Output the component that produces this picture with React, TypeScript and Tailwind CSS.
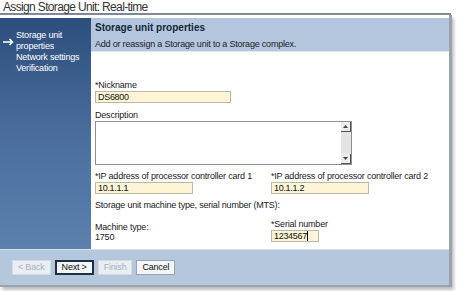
import { ReactNode } from 'react'

const sideItems = [
  { label: ['Storage unit', 'properties'], active: true },
  { label: ['Network settings'], active: false },
  { label: ['Verification'], active: false },
]

function Field({ label, required, children }: { label: string; required?: boolean; children: ReactNode }) {
  return (
    <div className="flex flex-col">
      <span className="h-[9px] leading-[9px] text-[9px] tracking-[-0.2px] text-[#222]">
        {required ? '*' : ''}
        {label}
      </span>
      <div className="mt-[1px]">{children}</div>
    </div>
  )
}

function TextInput({ value, width, caret }: { value: string; width: string; caret?: boolean }) {
  return (
    <div
      className={`${width} h-[12px] border border-[#bdb7a4] bg-[#fdf5d6] px-[2px] text-[9px] leading-[10px] tracking-[-0.3px] text-[#111] flex items-center`}
    >
      {value}
      {caret && <span className="w-px h-[10px] bg-black" />}
    </div>
  )
}

function Btn({ label, primary, disabled }: { label: string; primary?: boolean; disabled?: boolean }) {
  return (
    <button
      className={`h-[15px] px-[5px] text-[9px] leading-[11px] tracking-[-0.2px] ${
        primary
          ? 'border-2 border-[#1f2f44] bg-[#f4f6f8] text-[#111]'
          : disabled
            ? 'border border-[#d3dbe4] bg-[#e9eef3] text-[#a9b1bb]'
            : 'border border-[#9aa4b0] bg-[#f4f6f8] text-[#111]'
      }`}
    >
      {label}
    </button>
  )
}

export default function App() {
  return (
    <div
      className="w-[458px] h-[291px] bg-white overflow-hidden"
      style={{ fontFamily: '"Liberation Sans", Arial, sans-serif' }}
    >
      {/* Title */}
      <div className="w-[451px] h-[15px] border-b-2 border-[#7d8896] px-[3px] text-[12px] leading-[14px] tracking-[-0.65px] text-[#333]">
        Assign Storage Unit: Real-time
      </div>

      <div className="w-[452px] h-[272px] pt-[3px] border-r-[3px] border-b-[2px] border-[#9aa3ad] shadow-[2px_3px_3px_rgba(0,0,0,0.25)] flex flex-col">
        <div className="flex flex-1">
          {/* Sidebar */}
          <div className="w-[91px] bg-gradient-to-b from-[#2c4e7c] via-[#4a6d9e] to-[#5b81ae] pt-[12px] text-white text-[9px] leading-[11px] tracking-[-0.2px]">
            {sideItems.map((item) => (
              <div key={item.label[0]} className="flex">
                <div className="w-[16px] flex justify-center pt-[8px]">
                  {item.active && (
                    <svg width="11" height="8" viewBox="0 0 11 8" fill="none" stroke="white" strokeWidth="1.6">
                      <path d="M0 4h9.5M6.5 1l3 3-3 3" />
                    </svg>
                  )}
                </div>
                <div>
                  {item.label.map((l) => (
                    <div key={l}>{l}</div>
                  ))}
                </div>
              </div>
            ))}
          </div>

          {/* Content */}
          <div className="flex-1 flex flex-col">
            <div className="h-[34px] bg-[#b3c6dd] border-b border-[#dfe7f0] pl-[4px] pt-[4px]">
              <div className="text-[10px] font-bold leading-[12px] text-[#16263c]">Storage unit properties</div>
              <div className="mt-[5px] text-[9px] leading-[10px] tracking-[-0.2px] text-[#222]">
                Add or reassign a Storage unit to a Storage complex.
              </div>
            </div>

            <div className="pl-[4px] pt-[29px] flex flex-col">
              <Field label="Nickname" required>
                <TextInput value="DS6800" width="w-[136px]" />
              </Field>

              <div className="mt-[8px]">
                <Field label="Description">
                  <div className="w-[257px] h-[44px] border border-[#8f8f8f] bg-white flex justify-end">
                    <div className="w-[10px] h-full bg-[#e4e4e4] flex flex-col justify-between">
                      <div className="h-[10px] bg-[#ececec] border-r border-b border-[#555] flex items-center justify-center">
                        <svg width="5" height="3" viewBox="0 0 5 3">
                          <path d="M0 3L2.5 0 5 3z" fill="#444" />
                        </svg>
                      </div>
                      <div className="h-[10px] bg-[#ececec] border-r border-b border-[#555] flex items-center justify-center">
                        <svg width="5" height="3" viewBox="0 0 5 3">
                          <path d="M0 0L2.5 3 5 0z" fill="#444" />
                        </svg>
                      </div>
                    </div>
                  </div>
                </Field>
              </div>

              <div className="mt-[7px] flex">
                <div className="w-[176px]">
                  <Field label="IP address of processor controller card 1" required>
                    <TextInput value="10.1.1.1" width="w-[98px]" />
                  </Field>
                </div>
                <Field label="IP address of processor controller card 2" required>
                  <TextInput value="10.1.1.2" width="w-[98px]" />
                </Field>
              </div>

              <div className="mt-[6px] text-[9px] leading-[10px] tracking-[-0.2px] text-[#222]">
                Storage unit machine type, serial number (MTS):
              </div>

              <div className="mt-[10px] flex">
                <div className="w-[176px] pt-[3px] text-[9px] leading-[9px] tracking-[-0.2px] text-[#222]">
                  <div>Machine type:</div>
                  <div className="mt-[1px]">1750</div>
                </div>
                <Field label="Serial number" required>
                  <TextInput value="1234567" width="w-[48px]" caret />
                </Field>
              </div>
            </div>
          </div>
        </div>

        {/* Footer */}
        <div className="h-[36px] bg-[#b5c7dd] border-t border-[#d5e0ec] pl-[12px] flex items-center gap-[4px]">
          <Btn label="< Back" disabled />
          <Btn label="Next >" primary />
          <Btn label="Finish" disabled />
          <Btn label="Cancel" />
        </div>
      </div>
    </div>
  )
}
